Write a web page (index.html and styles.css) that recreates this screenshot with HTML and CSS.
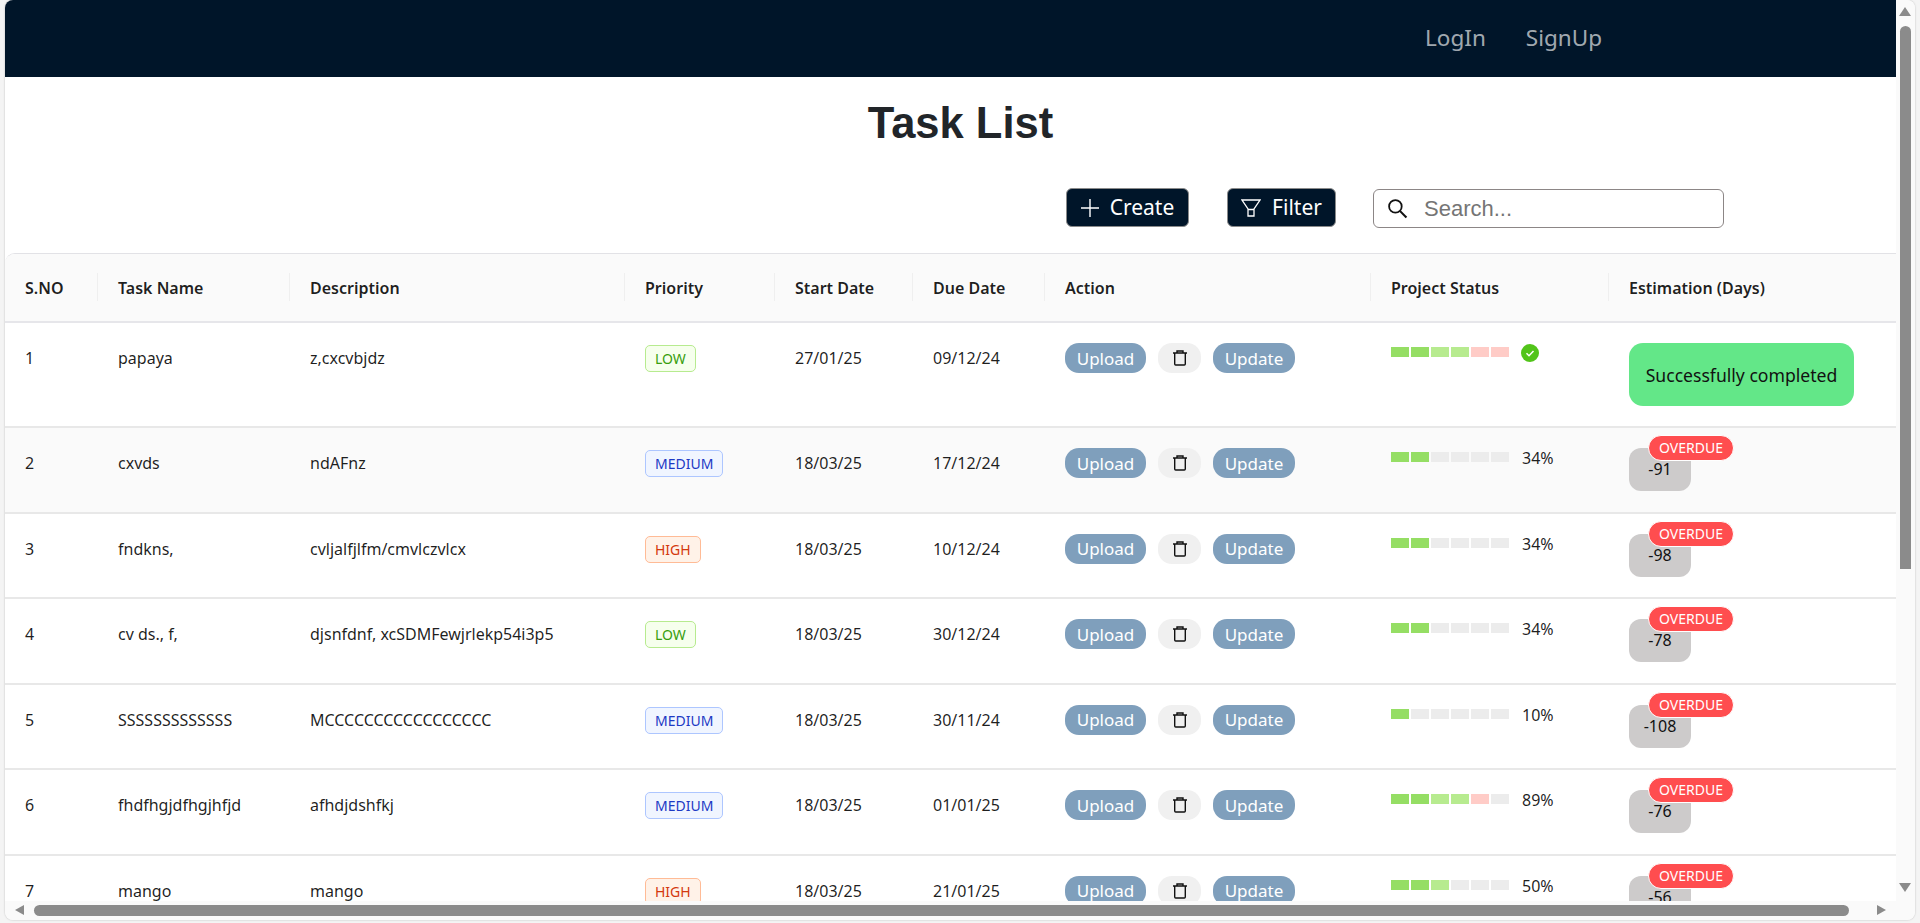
FILE: index.html
```html
<!DOCTYPE html>
<html lang="en">
<head>
    <meta charset="UTF-8">
    <meta name="viewport" content="width=device-width, initial-scale=1.0">
    <title>Task List</title>
    <link rel="stylesheet" href="styles.css">
</head>
<body>
    <svg class="defs" width="0" height="0">
        <symbol id="trash" viewBox="0 0 16 16">
            <path d="M5 2.800V1h6v1.800M1 3h14M2.700 3v11a1 1 0 0 0 1 1h8.600a1 1 0 0 0 1-1V3" fill="none" stroke="#111" stroke-width="1.400"/>
        </symbol>
    </svg>
    <div class="window">
        <div class="page">
            <nav class="navbar">
                <a class="nav-link" href="#">LogIn</a>
                <a class="nav-link" href="#">SignUp</a>
            </nav>
            <h1 class="title">Task List</h1>
            <div class="toolbar">
                <button class="tool-btn create-btn">
                    <svg width="18" height="18" viewBox="0 0 18 18"><path d="M9 0v18M0 9h18" fill="none" stroke="#fff" stroke-width="1.400"/></svg>
                    Create
                </button>
                <button class="tool-btn filter-btn">
                    <svg width="20" height="20" viewBox="0 0 20 20"><path d="M1 2h18l-6 9v7H7v-7zM7 11.500h6" fill="none" stroke="#fff" stroke-width="1.300"/></svg>
                    Filter
                </button>
                <label class="search">
                    <svg width="21" height="21" viewBox="0 0 20 20"><circle cx="8" cy="8" r="6" fill="none" stroke="#111" stroke-width="1.700"/><path d="M12.500 12.500l6 6" fill="none" stroke="#111" stroke-width="2"/></svg>
                    <input type="text" placeholder="Search...">
                </label>
            </div>
            <div class="table-wrap">
                <table class="tasks">
                    <colgroup>
                        <col class="c-no"><col class="c-name"><col class="c-desc"><col class="c-pri"><col class="c-start"><col class="c-due"><col class="c-action"><col class="c-status"><col class="c-est">
                    </colgroup>
                    <thead>
                        <tr>
                            <th>S.NO</th><th>Task Name</th><th>Description</th><th>Priority</th><th>Start Date</th><th>Due Date</th><th>Action</th><th>Project Status</th><th>Estimation (Days)</th>
                        </tr>
                    </thead>
                    <tbody>
                        <tr>
                            <td>1</td><td>papaya</td><td>z,cxcvbjdz</td>
                            <td><span class="tag low">LOW</span></td>
                            <td>27/01/25</td><td>09/12/24</td>
                            <td><div class="actions"><button class="pill upload">Upload</button><button class="pill trash"><svg width="16" height="16"><use href="#trash"/></svg></button><button class="pill update">Update</button></div></td>
                            <td><div class="progress"><span class="seg g1"></span><span class="seg g1"></span><span class="seg g2"></span><span class="seg g2"></span><span class="seg r"></span><span class="seg r"></span><svg class="check" width="18" height="18" viewBox="0 0 18 18"><circle cx="9" cy="9" r="9" fill="#52c41a"/><path d="M5.500 9.200l2.500 2.500 4.500-4.800" fill="none" stroke="#fff" stroke-width="1.500"/></svg></div></td>
                            <td><div class="done">Successfully completed</div></td>
                        </tr>
                        <tr class="alt">
                            <td>2</td><td>cxvds</td><td>ndAFnz</td>
                            <td><span class="tag medium">MEDIUM</span></td>
                            <td>18/03/25</td><td>17/12/24</td>
                            <td><div class="actions"><button class="pill upload">Upload</button><button class="pill trash"><svg width="16" height="16"><use href="#trash"/></svg></button><button class="pill update">Update</button></div></td>
                            <td><div class="progress"><span class="seg g1"></span><span class="seg g1"></span><span class="seg"></span><span class="seg"></span><span class="seg"></span><span class="seg"></span><span class="pct">34%</span></div></td>
                            <td><div class="days">-91<span class="badge">OVERDUE</span></div></td>
                        </tr>
                        <tr>
                            <td>3</td><td>fndkns,</td><td>cvljalfjlfm/cmvlczvlcx</td>
                            <td><span class="tag high">HIGH</span></td>
                            <td>18/03/25</td><td>10/12/24</td>
                            <td><div class="actions"><button class="pill upload">Upload</button><button class="pill trash"><svg width="16" height="16"><use href="#trash"/></svg></button><button class="pill update">Update</button></div></td>
                            <td><div class="progress"><span class="seg g1"></span><span class="seg g1"></span><span class="seg"></span><span class="seg"></span><span class="seg"></span><span class="seg"></span><span class="pct">34%</span></div></td>
                            <td><div class="days">-98<span class="badge">OVERDUE</span></div></td>
                        </tr>
                        <tr>
                            <td>4</td><td>cv ds., f,</td><td>djsnfdnf, xcSDMFewjrlekp54i3p5</td>
                            <td><span class="tag low">LOW</span></td>
                            <td>18/03/25</td><td>30/12/24</td>
                            <td><div class="actions"><button class="pill upload">Upload</button><button class="pill trash"><svg width="16" height="16"><use href="#trash"/></svg></button><button class="pill update">Update</button></div></td>
                            <td><div class="progress"><span class="seg g1"></span><span class="seg g1"></span><span class="seg"></span><span class="seg"></span><span class="seg"></span><span class="seg"></span><span class="pct">34%</span></div></td>
                            <td><div class="days">-78<span class="badge">OVERDUE</span></div></td>
                        </tr>
                        <tr>
                            <td>5</td><td>SSSSSSSSSSSSS</td><td>MCCCCCCCCCCCCCCCCC</td>
                            <td><span class="tag medium">MEDIUM</span></td>
                            <td>18/03/25</td><td>30/11/24</td>
                            <td><div class="actions"><button class="pill upload">Upload</button><button class="pill trash"><svg width="16" height="16"><use href="#trash"/></svg></button><button class="pill update">Update</button></div></td>
                            <td><div class="progress"><span class="seg g1"></span><span class="seg"></span><span class="seg"></span><span class="seg"></span><span class="seg"></span><span class="seg"></span><span class="pct">10%</span></div></td>
                            <td><div class="days">-108<span class="badge">OVERDUE</span></div></td>
                        </tr>
                        <tr>
                            <td>6</td><td>fhdfhgjdfhgjhfjd</td><td>afhdjdshfkj</td>
                            <td><span class="tag medium">MEDIUM</span></td>
                            <td>18/03/25</td><td>01/01/25</td>
                            <td><div class="actions"><button class="pill upload">Upload</button><button class="pill trash"><svg width="16" height="16"><use href="#trash"/></svg></button><button class="pill update">Update</button></div></td>
                            <td><div class="progress"><span class="seg g1"></span><span class="seg g1"></span><span class="seg g2"></span><span class="seg g2"></span><span class="seg r"></span><span class="seg"></span><span class="pct">89%</span></div></td>
                            <td><div class="days">-76<span class="badge">OVERDUE</span></div></td>
                        </tr>
                        <tr>
                            <td>7</td><td>mango</td><td>mango</td>
                            <td><span class="tag high">HIGH</span></td>
                            <td>18/03/25</td><td>21/01/25</td>
                            <td><div class="actions"><button class="pill upload">Upload</button><button class="pill trash"><svg width="16" height="16"><use href="#trash"/></svg></button><button class="pill update">Update</button></div></td>
                            <td><div class="progress"><span class="seg g1"></span><span class="seg g1"></span><span class="seg g2"></span><span class="seg"></span><span class="seg"></span><span class="seg"></span><span class="pct">50%</span></div></td>
                            <td><div class="days">-56<span class="badge">OVERDUE</span></div></td>
                        </tr>
                    </tbody>
                </table>
            </div>
        </div>

        <!-- scrollbars sit over the page -->
        <div class="vbar">
            <span class="arrow up"></span>
            <span class="vthumb"></span>
            <span class="arrow down"></span>
        </div>
        <div class="hbar">
            <span class="arrow left"></span>
            <span class="hthumb"></span>
            <span class="arrow right"></span>
        </div>
    </div>
</body>
</html>
```

FILE: styles.css
```css
* {
    margin: 0;
    padding: 0;
    box-sizing: border-box;
}

html, body {
    height: 100%;
    overflow: hidden;
}

body {
    background-color: #f4f4f4;
    font-family: "Noto Sans", "Open Sans", sans-serif;
    color: rgba(0, 0, 0, 0.88);
}

.defs {
    position: absolute;
}

.window {
    position: relative;
    width: 1910px;
    height: 920px;
    margin-left: 5px;
    background-color: #fff;
    border-radius: 8px;
    overflow: hidden;
    box-shadow: 0 0 2px rgba(0, 0, 0, 0.25);
}

.page {
    width: 1891px;
    height: 901px;
    overflow: hidden;
}

.navbar {
    height: 77px;
    background-color: #001529;
    display: flex;
    justify-content: flex-end;
    align-items: center;
    padding-right: 294px;
    padding-bottom: 2px;
}

.nav-link {
    color: rgba(255, 255, 255, 0.65);
    font-size: 22.500px;
    text-decoration: none;
    margin-left: 40px;
}

.title {
    font-family: "Liberation Sans", Arial, sans-serif;
    font-size: 43.500px;
    line-height: 52px;
    text-align: center;
    margin-top: 20px;
    padding-left: 20px;
    color: #212529;
}

.toolbar {
    display: flex;
    align-items: flex-start;
    margin-top: 39px;
    padding-left: 1061px;
    height: 65px;
}

.tool-btn {
    height: 39px;
    background-color: #001529;
    color: #fff;
    border: 1px solid #8a8a8a;
    border-radius: 6px;
    font-family: inherit;
    font-size: 21px;
    display: flex;
    align-items: center;
    justify-content: center;
    gap: 11px;
    padding-bottom: 2px;
}

.tool-btn svg {
    margin-top: 2px;
}

.create-btn {
    width: 123px;
}

.filter-btn {
    width: 109px;
    margin-left: 38px;
}

.search {
    width: 351px;
    height: 39px;
    margin-left: 37px;
    margin-top: 1px;
    border: 1px solid #8c8686;
    border-radius: 6px;
    display: flex;
    align-items: center;
    padding-left: 13px;
    gap: 16px;
}

.search input {
    border: 0;
    outline: 0;
    flex: 1;
    min-width: 0;
    font-family: "Liberation Sans", Arial, sans-serif;
    font-size: 22px;
    color: #333;
}

.search input::placeholder {
    color: #757575;
}

.table-wrap {
    border-top: 1px solid #e2e2e6;
    border-top-left-radius: 10px;
    overflow: hidden;
}

.tasks {
    width: 1891px;
    table-layout: fixed;
    border-collapse: separate;
    border-spacing: 0;
    font-size: 16px;
}

.c-no { width: 93px; }
.c-name { width: 192px; }
.c-desc { width: 335px; }
.c-pri { width: 150px; }
.c-start { width: 138px; }
.c-due { width: 132px; }
.c-action { width: 326px; }
.c-status { width: 238px; }
.c-est { width: 287px; }

.tasks th {
    position: relative;
    height: 69px;
    background-color: #fafafa;
    border-bottom: 2px solid #e6e6ea;
    padding: 0 20px;
    text-align: left;
    font-weight: 600;
}

.tasks th + th::before {
    content: "";
    position: absolute;
    left: -1px;
    top: 19px;
    height: 28px;
    border-left: 1px solid #efefef;
}

.tasks td {
    vertical-align: top;
    padding: 20px 20px 20.600px;
    line-height: 30px;
    border-bottom: 2px solid #e8e8e8;
}

.tasks .alt td {
    background-color: #fafafa;
}

.tag {
    display: inline-block;
    height: 27px;
    line-height: 25px;
    padding: 0 9px;
    border: 1px solid;
    border-radius: 5px;
    font-size: 14px;
    margin-top: 2px;
    vertical-align: top;
}

.low {
    color: #389e0d;
    background-color: #f6ffed;
    border-color: #b7eb8f;
}

.medium {
    color: #1d39c4;
    background-color: #f0f5ff;
    border-color: #adc6ff;
}

.high {
    color: #d4380d;
    background-color: #fff2e8;
    border-color: #ffbb96;
}

.actions {
    display: flex;
    gap: 12px;
}

.pill {
    height: 30px;
    border: 0;
    border-radius: 14px;
    font-family: inherit;
    font-size: 17px;
    color: #fff;
    background-color: #7f9fbc;
}

.upload { width: 81px; }
.update { width: 82px; }

.trash {
    width: 43px;
    background-color: #f0f0f0;
    display: flex;
    align-items: center;
    justify-content: center;
}

.progress {
    display: flex;
    align-items: flex-start;
    gap: 2px;
    padding-top: 4px;
}

.seg {
    width: 18px;
    height: 10px;
    background-color: #ececec;
}

.g1 { background-color: #95de64; }
.g2 { background-color: #b7eb8f; }
.r { background-color: #ffccc7; }

.pct {
    margin-left: 11px;
    margin-top: -9px;
}

.check {
    margin-left: 10px;
    margin-top: -3px;
}

.done {
    width: 225px;
    height: 63px;
    margin-bottom: -0.600px;
    background-color: #63e788;
    border-radius: 14px;
    display: flex;
    align-items: center;
    justify-content: center;
    color: #111;
    font-size: 17.600px;
}

.days {
    position: relative;
    width: 62px;
    height: 43px;
    background-color: #cdcbcb;
    border-radius: 12px;
    text-align: center;
    line-height: 26px;
    padding-top: 8px;
    color: #111;
    font-size: 16px;
}

.badge {
    position: absolute;
    left: 19px;
    top: -13px;
    height: 26px;
    line-height: 24px;
    padding: 0 10px;
    background-color: #ff4d4f;
    border: 1px solid #fff;
    border-radius: 13px;
    color: #fff;
    font-size: 14px;
}

.vbar {
    position: absolute;
    left: 1891px;
    top: 0;
    width: 19px;
    height: 901px;
    background-color: #fafafa;
}

.vthumb {
    position: absolute;
    left: 4px;
    top: 26px;
    width: 11px;
    height: 543px;
    background-color: #8b8b8b;
    border-radius: 6px 6px 0 0;
}

.hbar {
    position: absolute;
    left: 0;
    top: 901px;
    width: 1910px;
    height: 19px;
    background-color: #fafafa;
}

.hthumb {
    position: absolute;
    left: 29px;
    top: 4px;
    width: 1815px;
    height: 11px;
    background-color: #8b8b8b;
    border-radius: 6px;
}

.arrow {
    position: absolute;
    width: 0;
    height: 0;
    border: 0 solid transparent;
}

.up {
    left: 3px;
    top: 7px;
    border-width: 0 6.500px 9px;
    border-bottom-color: #8b8b8b;
}

.down {
    left: 3px;
    top: 883px;
    border-width: 9px 6.500px 0;
    border-top-color: #8b8b8b;
}

.left {
    left: 10px;
    top: 4px;
    border-width: 5.500px 9px 5.500px 0;
    border-right-color: #8b8b8b;
}

.right {
    left: 1872px;
    top: 4px;
    border-width: 5.500px 0 5.500px 9px;
    border-left-color: #8b8b8b;
}
```
